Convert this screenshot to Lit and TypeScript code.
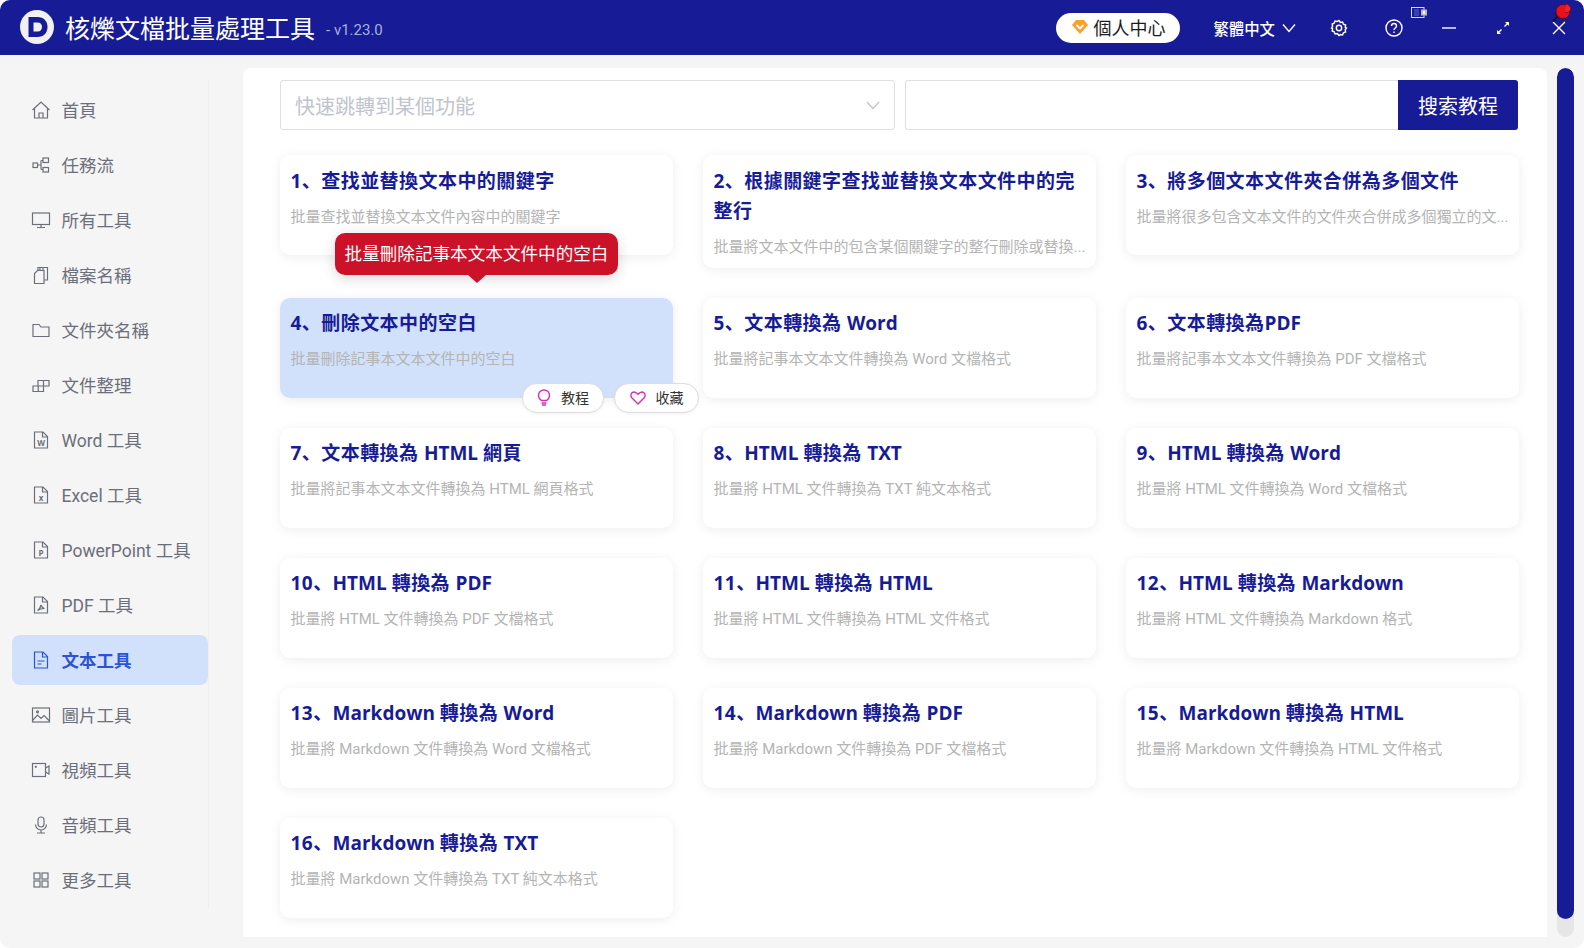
import { css, html, LitElement, svg } from 'lit';
import { customElement } from 'lit/decorators.js';

const DOC = svg`<path d="M3.500 2h8.500l4.500 4.500V18H3.500z"/><path d="M11.500 2v5h5"/>`;

const NAV = [
  { label: '首頁', icon: svg`<path d="M1.500 10 10 2l8.500 8M3.500 8.500V18h13V8.500M8 18v-5h4v5"/>` },
  { label: '任務流', icon: svg`<rect x="2" y="8" width="4.500" height="4.500"/><rect x="12" y="3" width="5.500" height="4.500"/><rect x="12" y="12.500" width="5.500" height="4.500"/><path d="M6.500 10H10M10 5.500v9M10 5.500h2M10 14.500h2"/>` },
  { label: '所有工具', icon: svg`<rect x="1.500" y="3" width="17" height="11.500"/><path d="M10 14.500v3M6 17.500h8"/>` },
  { label: '檔案名稱', icon: svg`<path d="M3.500 8.500 6.500 5.500H13v13H3.500z"/><path d="M7 5.500V2.500h9.500V15H13M9 2.500v3M12 2.500v3"/>` },
  { label: '文件夾名稱', icon: svg`<path d="M2 4.500h6l2 2.500h8v9.500H2z"/>` },
  { label: '文件整理', icon: svg`<path d="M2 11h10.500v5.500H2zM7.250 11v5.500M7 11V5.500h11V11h-5.500M12.500 5.500V11"/>` },
  { label: 'Word 工具', icon: svg`${DOC}<text x="10" y="15.500" class="mark">W</text>` },
  { label: 'Excel 工具', icon: svg`${DOC}<text x="10" y="15.500" class="mark">x</text>` },
  { label: 'PowerPoint 工具', icon: svg`${DOC}<text x="10" y="15.500" class="mark">P</text>` },
  { label: 'PDF 工具', icon: svg`${DOC}<path d="M6.500 15.500c2-1 3-3.500 3.500-5.500.5 2 1.500 3 3.500 3.500-2.500 0-5 .5-7 2z"/>` },
  { label: '文本工具', icon: svg`${DOC}<path d="M6.500 11h7M6.500 14h4"/>` },
  { label: '圖片工具', icon: svg`<rect x="1.500" y="3" width="17" height="14"/><path d="m1.500 15.500 5-5.500 3.500 3.500 3-3 5.500 5.500"/><circle cx="6.500" cy="6.800" r="1"/>` },
  { label: '視頻工具', icon: svg`<rect x="1.500" y="3.500" width="13" height="13"/><path d="M14.500 8 18 6v8l-3.500-2"/><circle cx="4.800" cy="6.800" r=".5"/>` },
  { label: '音頻工具', icon: svg`<rect x="7" y="2" width="6" height="10" rx="3"/><path d="M4.500 9.500a5.500 5.500 0 0 0 11 0M10 15v3M6 18h8"/>` },
  { label: '更多工具', icon: svg`<rect x="3" y="3" width="6" height="6"/><rect x="11" y="3" width="6" height="6"/><rect x="3" y="11" width="6" height="6"/><rect x="11" y="11" width="6" height="6"/>` },
];

const TOOLS = [
  ['1、查找並替換文本中的關鍵字', '批量查找並替換文本文件內容中的關鍵字'],
  ['2、根據關鍵字查找並替換文本文件中的完整行', '批量將文本文件中的包含某個關鍵字的整行刪除或替換...'],
  ['3、將多個文本文件夾合併為多個文件', '批量將很多包含文本文件的文件夾合併成多個獨立的文...'],
  ['4、刪除文本中的空白', '批量刪除記事本文本文件中的空白'],
  ['5、文本轉換為 Word', '批量將記事本文本文件轉換為 Word 文檔格式'],
  ['6、文本轉換為PDF', '批量將記事本文本文件轉換為 PDF 文檔格式'],
  ['7、文本轉換為 HTML 網頁', '批量將記事本文本文件轉換為 HTML 網頁格式'],
  ['8、HTML 轉換為 TXT', '批量將 HTML 文件轉換為 TXT 純文本格式'],
  ['9、HTML 轉換為 Word', '批量將 HTML 文件轉換為 Word 文檔格式'],
  ['10、HTML 轉換為 PDF', '批量將 HTML 文件轉換為 PDF 文檔格式'],
  ['11、HTML 轉換為 HTML', '批量將 HTML 文件轉換為 HTML 文件格式'],
  ['12、HTML 轉換為 Markdown', '批量將 HTML 文件轉換為 Markdown 格式'],
  ['13、Markdown 轉換為 Word', '批量將 Markdown 文件轉換為 Word 文檔格式'],
  ['14、Markdown 轉換為 PDF', '批量將 Markdown 文件轉換為 PDF 文檔格式'],
  ['15、Markdown 轉換為 HTML', '批量將 Markdown 文件轉換為 HTML 文件格式'],
  ['16、Markdown 轉換為 TXT', '批量將 Markdown 文件轉換為 TXT 純文本格式'],
];

@customElement('app-root')
export class AppRoot extends LitElement {
  static styles = css`
    :host {
      display: block;
      width: 1584px;
      height: 948px;
      font-family: "Roboto", "Noto Sans CJK SC", sans-serif;
    }

    .window {
      position: relative;
      width: 1584px;
      height: 948px;
      display: flex;
      flex-direction: column;
      background: #f5f5f5;
      border-radius: 10px;
      overflow: hidden;
    }

    .header {
      flex: none;
      height: 55px;
      display: flex;
      align-items: center;
      background: #171c96;
      color: #fff;
      padding-left: 20px;
    }

    .logo { width: 34px; height: 34px; flex: none; margin-top: -1px; }
    .app-name { font-size: 25px; margin-left: 11px; white-space: nowrap; line-height: 55px; margin-top: 4px; }
    .version { font-size: 15px; margin-left: 11px; color: #a4b2dc; margin-top: 4px; }

    .header-right {
      margin-left: auto;
      display: flex;
      align-items: center;
      height: 100%;
    }

    .pill {
      width: 124px;
      height: 30px;
      padding-bottom: 1px;
      border-radius: 15px;
      background: #fff;
      color: #1c1c1c;
      font-size: 18px;
      display: flex;
      align-items: center;
      justify-content: center;
      gap: 4px;
      box-sizing: border-box;
    }

    .lang { font-size: 15.400px; margin-left: 33px; font-weight: 500; white-space: nowrap; }
    .head-ico { fill: none; stroke: #fff; stroke-width: 1.400; flex: none; }
    .chev { margin-left: 7px; }
    .gear { margin-left: 33.500px; }
    .help { margin-left: 37.500px; }
    .min { margin-left: 39px; }
    .expand { margin-left: 40px; }
    .close { margin-left: 42px; margin-right: 18px; }

    .tray { position: absolute; left: 1411px; top: 7px; }
    .pin { position: absolute; left: 1551px; top: 2px; }

    .body {
      flex: 1;
      min-height: 0;
      display: flex;
      padding: 13px 10px 11px 0;
    }

    .side {
      flex: none;
      width: 209px;
      margin-bottom: 29px;
      margin-top: 12px;
      padding-left: 12px;
      padding-top: 5px;
      box-sizing: border-box;
      border-right: 1px solid #eeeeee;
      display: flex;
      flex-direction: column;
      gap: 5px;
    }

    .nav {
      height: 50px;
      width: 196px;
      display: flex;
      align-items: center;
      flex: none;
      padding-left: 18.500px;
      padding-bottom: 1px;
      box-sizing: border-box;
      border-radius: 8px;
      font-size: 17.500px;
      color: #6c6f7a;
      white-space: nowrap;
    }

    .nav svg { width: 20px; height: 20px; fill: none; stroke: currentColor; stroke-width: 1.200; margin-right: 11px; flex: none; }
    .nav .mark { fill: currentColor; stroke: none; font-size: 8px; font-weight: 700; text-anchor: middle; font-family: "Open Sans", sans-serif; }
    .nav.active { background: #d1e1fb; color: #2c53d6; font-weight: 700; }

    .panel {
      margin-left: 34px;
      flex: 1;
      min-width: 0;
      background: #fff;
      border-radius: 8px 8px 0 0;
      padding: 12px 29px 0 37px;
      box-sizing: border-box;
    }

    .toolbar { display: flex; height: 50px; gap: 10px; margin-bottom: 25px; }

    .select {
      width: 615px;
      flex: none;
      border: 1px solid #dcdfe6;
      border-radius: 3px;
      box-sizing: border-box;
      display: flex;
      align-items: center;
      justify-content: space-between;
      padding: 1px 14px 0 14px;
      font-size: 20px;
      color: #c0c4cc;
    }

    .select svg { fill: none; stroke: #c0c4cc; stroke-width: 1.300; }

    .search { flex: 1; display: flex; min-width: 0; }
    .search-input { flex: 1; border: 1px solid #dcdfe6; border-right: 0; border-radius: 3px 0 0 3px; }
    .search-btn {
      width: 120px;
      padding-top: 1px;
      box-sizing: border-box;
      background: #171c96;
      color: #fff;
      font-size: 20px;
      border-radius: 0 3px 3px 0;
      display: flex;
      align-items: center;
      justify-content: center;
    }

    .grid {
      display: grid;
      grid-template-columns: repeat(3, 393px);
      column-gap: 30px;
      row-gap: 30px;
      align-items: start;
    }

    .card {
      position: relative;
      min-height: 100px;
      padding: 10.500px 10.500px 10px;
      box-sizing: border-box;
      background: #fff;
      border-radius: 10px;
      box-shadow: 0 2px 12px rgba(0, 0, 0, 0.07);
    }

    .card.active { background: #d1e1fb; }

    .title {
      font-family: "Open Sans", "Noto Sans CJK SC", sans-serif;
      font-size: 19px;
      font-weight: 700;
      line-height: 30px;
      letter-spacing: 0.450px;
      color: #171c96;
    }

    .latin { letter-spacing: 0; }

    .desc {
      margin-top: 10px;
      font-size: 15px;
      line-height: 22px;
      color: #b4b4b4;
      white-space: nowrap;
      overflow: hidden;
    }

    .actions {
      position: absolute;
      right: -26px;
      bottom: -15px;
      display: flex;
      gap: 10px;
    }

    .action {
      height: 30px;
      box-sizing: border-box;
      border: 1px solid #dedede;
      border-radius: 15px;
      background: #fff;
      font-size: 14px;
      color: #333;
      display: flex;
      align-items: center;
      justify-content: center;
      gap: 10px;
      box-shadow: 0 1px 3px rgba(0, 0, 0, 0.06);
    }

    .action span { margin-bottom: 2px; }
    .action svg { fill: none; stroke: #d62eb4; stroke-width: 1.400; }
    .action.tutorial { width: 82px; }
    .action.fav { width: 85px; }

    .tooltip {
      position: absolute;
      left: 55px;
      top: -65px;
      width: 283px;
      height: 42px;
      padding-bottom: 2px;
      box-sizing: border-box;
      border-radius: 10px;
      background: #cc1229;
      color: #fff;
      font-size: 17.600px;
      display: flex;
      align-items: center;
      justify-content: center;
      white-space: nowrap;
      box-shadow: 0 3px 14px rgba(0, 0, 0, 0.16);
    }

    .tooltip::after {
      content: "";
      position: absolute;
      left: 50%;
      bottom: -8px;
      margin-left: -9px;
      border-left: 9px solid transparent;
      border-right: 9px solid transparent;
      border-top: 8px solid #cc1229;
    }

    .scrollbar {
      flex: none;
      width: 17px;
      margin-left: 10px;
      border-radius: 9px;
      background: #e6e6e6;
      overflow: hidden;
    }

    .thumb { height: 851px; border-radius: 9px; background: #171c96; }
  `;

  renderHeader() {
    return html`
      <div class="header">
        <svg class="logo" viewBox="0 0 34 34">
          <circle cx="17" cy="17" r="17" fill="#f1f1f3"/>
          <path d="M8.500 7h9c6 0 10 4 10 10s-4 10-10 10h-9z" fill="#171c96"/>
          <path d="M13.500 12.500h4c3 0 4.500 2 4.500 4.500s-1.500 4.500-4.500 4.500h-4z" fill="#f1f1f3"/>
        </svg>
        <div class="app-name">核爍文檔批量處理工具</div>
        <div class="version">- v1.23.0</div>
        <div class="header-right">
          <div class="pill">
            <svg width="18" height="16" viewBox="0 0 18 16">
              <path d="M5 1h8l4 5-8 9-8-9z" fill="#f9a22b"/>
              <path d="m5.500 6 3.500 3.500L12.500 6" fill="none" stroke="#fff" stroke-width="1.800"/>
            </svg>
            <span>個人中心</span>
          </div>
          <div class="lang">繁體中文</div>
          <svg class="head-ico chev" width="14" height="10" viewBox="0 0 14 10"><path d="m1 1.500 6 7 6-7"/></svg>
          <svg class="head-ico gear" width="18" height="18" viewBox="0 0 18 18">
            <path d="M9 1.500 10.300 3.400l2.300-.4.800 2.200 2.200.8-.4 2.300L16.500 9l-1.300 1.700.4 2.300-2.200.8-.8 2.200-2.300-.4L9 16.500l-1.700-1.900-2.300.4-.8-2.200-2-.8.400-2.300L1.500 9l1.100-1.700-.4-2.300 2-.8.800-2.200 2.300.4z"/>
            <circle cx="9" cy="9" r="2.700"/>
          </svg>
          <svg class="head-ico help" width="18" height="18" viewBox="0 0 18 18">
            <circle cx="9" cy="9" r="8"/>
            <path d="M6.500 7c0-1.500 1.100-2.500 2.500-2.500S11.500 5.500 11.500 7c0 2-2.500 2-2.500 4M9 12.500v1.500"/>
          </svg>
          <svg class="head-ico min" width="14" height="14" viewBox="0 0 14 14"><path d="M0 7h14"/></svg>
          <svg class="head-ico expand" width="14" height="14" viewBox="0 0 14 14">
            <path d="m2 12 3.500-3.500M8.500 5.500 12 2"/>
            <path d="M1 13V9l4 4zM13 1v4L9 1z" fill="#fff" stroke="none"/>
          </svg>
          <svg class="head-ico close" width="14" height="14" viewBox="0 0 14 14"><path d="m1 1 12 12M13 1 1 13"/></svg>
        </div>
        <svg class="tray" width="16" height="11" viewBox="0 0 16 11">
          <rect x=".5" y=".5" width="12.500" height="10" fill="#171c96" stroke="#d8d8e0"/>
          <rect x="3" y="2" width="5" height="7" fill="#3a3fae"/>
          <rect x="10" y="2.500" width="6" height="6" fill="#b9b9c4"/>
          <rect x="12" y="4" width="2" height="3" fill="#f4f4f4"/>
        </svg>
        <svg class="pin" width="22" height="22" viewBox="0 0 22 22">
          <path d="M2 19.500 7 14" stroke="#111" stroke-width="1.800"/>
          <path d="M5 9 4 12.500 9 17l3.500-1.500z" fill="#4a0a10"/>
          <circle cx="12" cy="9.500" r="7" fill="#e8101e" stroke="#5a0a10" stroke-width=".8"/>
          <path d="M15 2c3 .5 5 3 4.500 5.500s-3 3.500-5.500 3" fill="#f3202a" stroke="#7a0a12" stroke-width=".8"/>
        </svg>
      </div>
    `;
  }

  // latin runs in the title are not letter-spaced, only the CJK ones
  renderTitle(title: string) {
    return title.split(/([A-Za-z][A-Za-z ]*)/).map((part) =>
      /^[A-Za-z]/.test(part) ? html`<span class="latin">${part}</span>` : part);
  }

  renderCard(tool: string[], i: number) {
    const active = i === 3;
    return html`
      <div class="card ${active ? 'active' : ''}">
        <div class="title">${this.renderTitle(tool[0])}</div>
        <div class="desc">${tool[1]}</div>
        ${active ? html`
          <div class="tooltip">批量刪除記事本文本文件中的空白</div>
          <div class="actions">
            <div class="action tutorial">
              <svg width="14" height="17" viewBox="0 0 14 17"><path d="M4.500 11.500C3 10.500 1.500 9 1.500 6.500a5.500 5.500 0 0 1 11 0c0 2.500-1.500 4-3 5zM4.500 14h5M5 16h4"/></svg>
              <span>教程</span>
            </div>
            <div class="action fav">
              <svg width="16" height="14" viewBox="0 0 16 14"><path d="M8 13 1.800 6.800C.5 5.300.6 3 2 1.800S5.800.8 8 3.300c2.200-2.500 4.600-2.700 6-1.500s1.500 3.500.2 5z"/></svg>
              <span>收藏</span>
            </div>
          </div>
        ` : ''}
      </div>
    `;
  }

  render() {
    return html`
      <div class="window">
        ${this.renderHeader()}
        <div class="body">
          <div class="side">
            ${NAV.map((n) => html`
              <div class="nav ${n.label === '文本工具' ? 'active' : ''}">
                <svg viewBox="0 0 20 20">${n.icon}</svg>
                <span>${n.label}</span>
              </div>
            `)}
          </div>
          <div class="panel">
            <div class="toolbar">
              <div class="select">
                <span>快速跳轉到某個功能</span>
                <svg width="14" height="9" viewBox="0 0 14 9"><path d="m1 1 6 6.500L13 1"/></svg>
              </div>
              <div class="search">
                <div class="search-input"></div>
                <div class="search-btn">搜索教程</div>
              </div>
            </div>
            <div class="grid">
              ${TOOLS.map((t, i) => this.renderCard(t, i))}
            </div>
          </div>
          <div class="scrollbar"><div class="thumb"></div></div>
        </div>
      </div>
    `;
  }
}
